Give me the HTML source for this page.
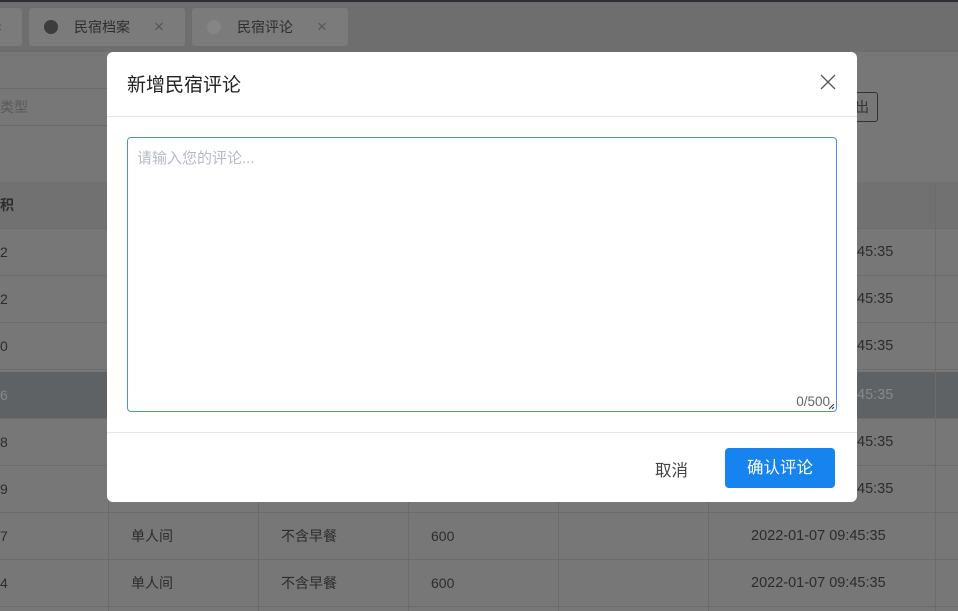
<!DOCTYPE html>
<html style="width:958px;height:611px;overflow:hidden"><head><meta charset="utf-8"><style>
*{margin:0;padding:0;box-sizing:border-box}
body{width:958px;height:611px;overflow:hidden;background:#777;font-family:"Liberation Sans","Noto Sans CJK SC",sans-serif;position:relative;color:#2a2a2a}
.abs{position:absolute}
.topline{left:0;top:0;width:958px;height:2px;background:#2b2e35}
.tabbar{left:0;top:2px;width:958px;height:50px;background:#6e6e6e}
.tab{top:8px;height:38px;background:#7b7b7b;border-radius:3px;font-size:14px;color:#2e2e2e;line-height:38px}
.row{left:0;width:958px;height:47px;border-bottom:1px solid #6c6c6c;font-size:14px;color:#2c2c2c;line-height:47px}
.vl{top:182px;width:1px;height:429px;background:#6c6c6c}
.modal{left:107px;top:52px;width:750px;height:450px;background:#fff;border-radius:6px}
.d{font-size:14.5px}
</style></head><body>
<div class="abs topline"></div>
<div class="abs tabbar"></div>
<div class="abs tab" style="left:-10px;width:32px"><span style="position:absolute;left:4px;color:#555">×</span></div>
<div class="abs tab" style="left:29px;width:156px"><span class="abs" style="left:15px;top:12px;width:14px;height:14px;border-radius:50%;background:#3d3d3d"></span><span class="abs" style="left:45px">民宿档案</span><span class="abs" style="left:125px;color:#555;font-size:17px">×</span></div>
<div class="abs tab" style="left:192px;width:156px"><span class="abs" style="left:15px;top:12px;width:14px;height:14px;border-radius:50%;background:#858585"></span><span class="abs" style="left:45px">民宿评论</span><span class="abs" style="left:125px;color:#555;font-size:17px">×</span></div>
<div class="abs" style="left:0;top:88px;width:110px;height:38px;border-top:1px solid #6a6a6a;border-bottom:1px solid #6a6a6a;font-size:14px;line-height:36px;color:#5a5a5a">类型</div>
<div class="abs" style="left:845px;top:92px;width:33px;height:30px;border:1px solid #333;border-radius:3px;font-size:14px;line-height:28px;color:#333;text-align:right;padding-right:8px">出</div>
<div class="abs row" style="top:182px;background:#717171;font-weight:bold">积</div>
<div class="abs row" style="top:229px">2</div>
<div class="abs row" style="top:276px">2</div>
<div class="abs row" style="top:323px">0</div>
<div class="abs row" style="top:372px;background:#5e6265;color:#888">6</div>
<div class="abs row" style="top:419px">8</div>
<div class="abs row" style="top:466px">9</div>
<div class="abs row" style="top:513px">7<span class="abs" style="left:131px">单人间</span><span class="abs" style="left:281px">不含早餐</span><span class="abs" style="left:431px">600</span><span class="abs d" style="left:751px">2022-01-07 09:45:35</span></div>
<div class="abs row" style="top:560px">4<span class="abs" style="left:131px">单人间</span><span class="abs" style="left:281px">不含早餐</span><span class="abs" style="left:431px">600</span><span class="abs d" style="left:751px">2022-01-07 09:45:35</span></div>
<div class="abs d" style="left:857px;top:229px;line-height:47px;color:#2c2c2c">45:35</div>
<div class="abs d" style="left:857px;top:276px;line-height:47px;color:#2c2c2c">45:35</div>
<div class="abs d" style="left:857px;top:323px;line-height:47px;color:#2c2c2c">45:35</div>
<div class="abs d" style="left:857px;top:372px;line-height:47px;color:#888">45:35</div>
<div class="abs d" style="left:857px;top:419px;line-height:47px;color:#2c2c2c">45:35</div>
<div class="abs d" style="left:857px;top:466px;line-height:47px;color:#2c2c2c">45:35</div>
<div class="abs vl" style="left:108px"></div>
<div class="abs vl" style="left:258px"></div>
<div class="abs vl" style="left:408px"></div>
<div class="abs vl" style="left:558px"></div>
<div class="abs vl" style="left:708px"></div>
<div class="abs vl" style="left:935px"></div>

<div class="abs modal">
 <div class="abs" style="left:20px;top:18px;font-size:19px;color:#222">新增民宿评论</div>
 <svg class="abs" style="left:713px;top:22px" width="16" height="16" viewBox="0 0 16 16"><path d="M1 1L15 15M15 1L1 15" stroke="#555" stroke-width="1.3"/></svg>
 <div class="abs" style="left:0;top:64px;width:750px;height:1px;background:#e4e6ea"></div>
 <div class="abs" style="left:20px;top:85px;width:710px;height:275px;border:1px solid #4d90e6;border-radius:4px">
  <div class="abs" style="left:9px;top:9px;font-size:15px;color:#b5bac4">请输入您的评论...</div>
  <div class="abs" style="right:6px;bottom:2px;font-size:13.5px;color:#666">0/500</div>
  <svg class="abs" style="right:1px;bottom:1px" width="7" height="7"><path d="M1 6L6 1M4 6L6 4" stroke="#333"/></svg>
 </div>
 <div class="abs" style="left:0;top:380px;width:750px;height:1px;background:#e4e6ea"></div>
 <div class="abs" style="left:548px;top:405px;font-size:16.5px;color:#444">取消</div>
 <div class="abs" style="left:618px;top:396px;width:110px;height:40px;background:#1683ef;border-radius:4px;color:#fff;font-size:16.5px;text-align:center;line-height:40px">确认评论</div>
</div>
</body></html>
